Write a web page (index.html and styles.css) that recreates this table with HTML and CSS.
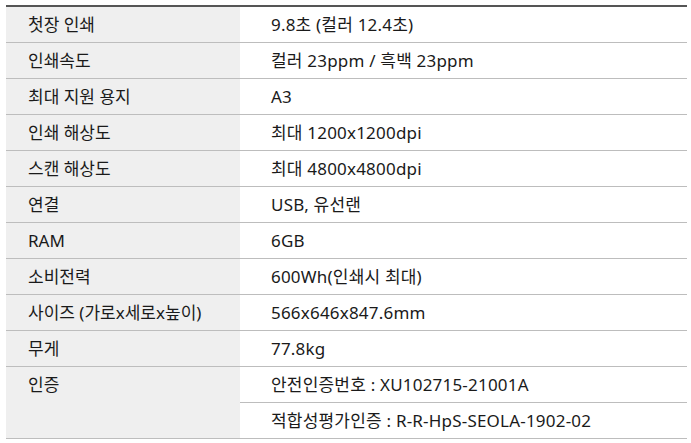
FILE: index.html
```html
<!DOCTYPE html>
<html lang="ko">
<head>
<meta charset="utf-8">
<link rel="stylesheet" href="styles.css">
</head>
<body>
<table class="spec">
  <tbody>
    <tr><th>첫장 인쇄</th><td>9.8초 (컬러 12.4초)</td></tr>
    <tr><th>인쇄속도</th><td>컬러 23ppm / 흑백 23ppm</td></tr>
    <tr><th>최대 지원 용지</th><td>A3</td></tr>
    <tr><th>인쇄 해상도</th><td>최대 1200x1200dpi</td></tr>
    <tr><th>스캔 해상도</th><td>최대 4800x4800dpi</td></tr>
    <tr><th>연결</th><td>USB, 유선랜</td></tr>
    <tr><th>RAM</th><td>6GB</td></tr>
    <tr><th>소비전력</th><td>600Wh(인쇄시 최대)</td></tr>
    <tr><th>사이즈 (가로x세로x높이)</th><td>566x646x847.6mm</td></tr>
    <tr><th>무게</th><td>77.8kg</td></tr>
    <tr><th rowspan="2" class="top">인증</th><td>안전인증번호 : XU102715-21001A</td></tr>
    <tr><td>적합성평가인증 : R-R-HpS-SEOLA-1902-02</td></tr>
  </tbody>
</table>
</body>
</html>
```
FILE: styles.css
```css
html, body {
  margin: 0;
  padding: 0;
  background: #fff;
}
body {
  padding: 5px 4px 0 6px;
  font-family: "Noto Sans", "Noto Sans CJK KR", sans-serif;
  font-size: 17px;
  color: #1a1a1a;
}
.spec {
  width: 681px;
  border-collapse: collapse;
  border-top: 2px solid #555;
}
.spec th, .spec td {
  height: 35px;
  padding: 0;
  border-bottom: 1px solid #bdbdbd;
  text-align: left;
  font-weight: 400;
  vertical-align: middle;
  line-height: 20px;
  box-sizing: content-box;
}
.spec th {
  width: 212px;
  padding-left: 22px;
  background: #efefef;
}
.spec td {
  padding-left: 31px;
  background: #fff;
  letter-spacing: 0.2px;
}
.spec th.top {
  vertical-align: top;
  padding-top: 8px;
  height: auto;
}
```
